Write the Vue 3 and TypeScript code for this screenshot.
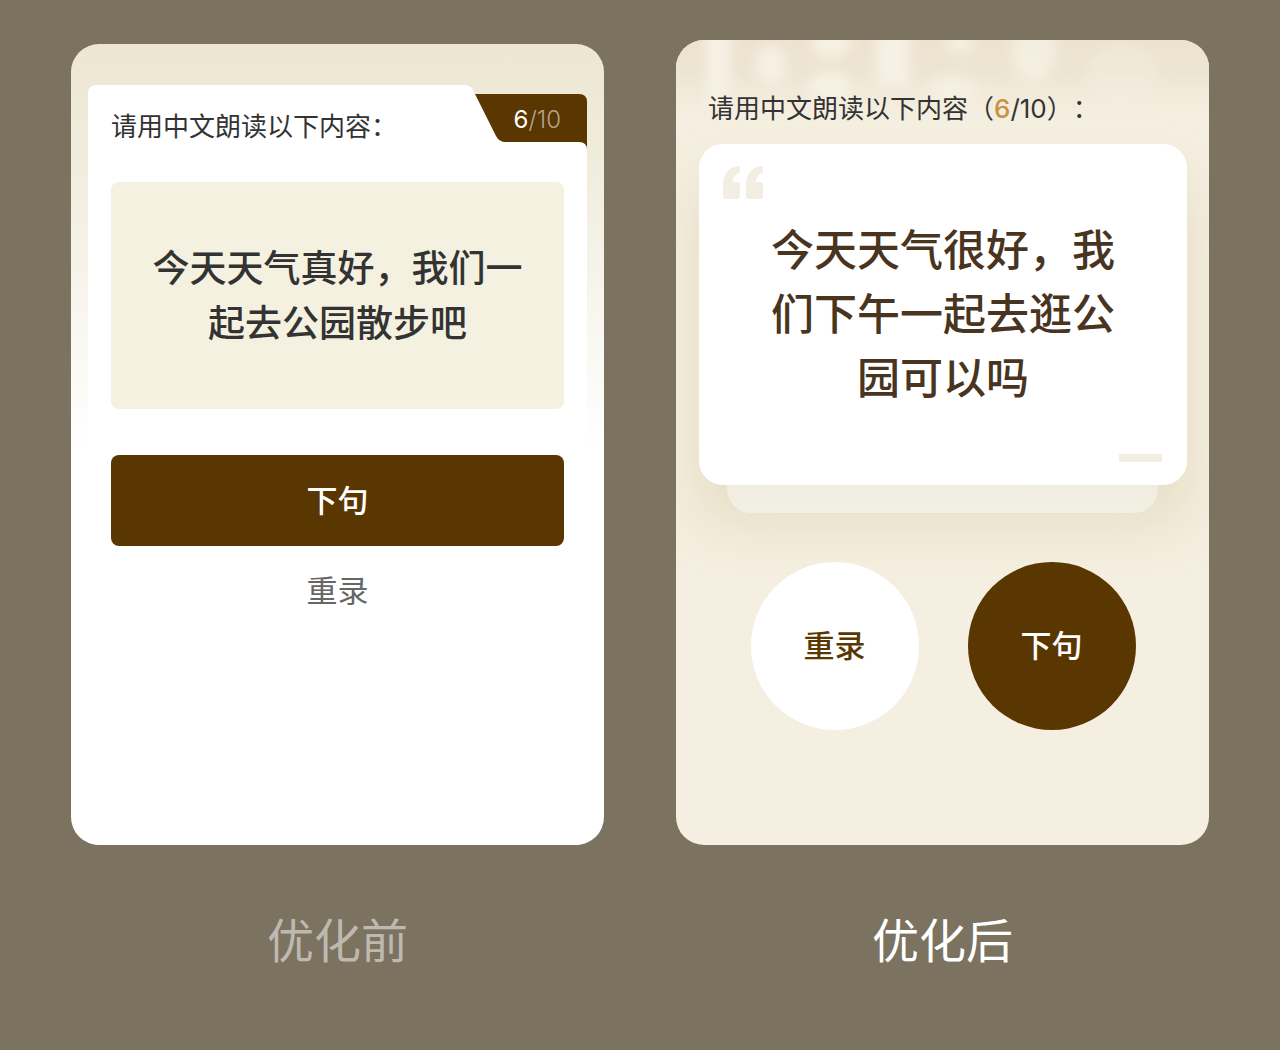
<script setup lang="ts">
interface Progress {
  current: number
  total: number
}

const progress: Progress = { current: 6, total: 10 }
const prompt = '请用中文朗读以下内容'
const sentenceBefore = '今天天气真好，我们一起去公园散步吧'
const sentenceAfter = '今天天气很好，我们下午一起去逛公园可以吗'
</script>

<template>
  <main class="board">
    <section class="column">
      <div class="phone phone-before">
        <div class="sheet">
          <header class="sheet-head">
            <h2 class="prompt">{{ prompt }}：</h2>
            <div class="tab">
              <svg class="tab-shape" viewBox="0 0 130 65" width="130" height="65" aria-hidden="true">
                <path d="M14 9H122Q130 9 130 17V65H30Z" fill="#5a3600" />
                <path d="M0 0H8Q14 0 17 7L39 51Q42 57 49 57H122Q130 57 130 65H0Z" fill="#fff" />
              </svg>
              <span class="tab-count"><b>{{ progress.current }}</b>/{{ progress.total }}</span>
            </div>
          </header>
          <div class="sheet-body">
            <p class="sentence-box">{{ sentenceBefore }}</p>
            <button type="button" class="bar-button">下句</button>
            <button type="button" class="text-button">重录</button>
          </div>
        </div>
      </div>
      <p class="caption caption-muted">优化前</p>
    </section>

    <section class="column">
      <div class="phone phone-after">
        <svg class="haze" viewBox="0 0 533 80" preserveAspectRatio="none" aria-hidden="true">
          <defs>
            <filter id="soft" x="-20%" y="-40%" width="140%" height="180%">
              <feGaussianBlur stdDeviation="6" />
            </filter>
            <linearGradient id="fade" x1="0" y1="0" x2="0" y2="1">
              <stop offset="0" stop-color="#ece2d0" />
              <stop offset="0.4" stop-color="#ede5d3" />
              <stop offset="1" stop-color="#f0e8d8" stop-opacity="0" />
            </linearGradient>
          </defs>
          <rect width="533" height="80" fill="url(#fade)" />
          <g filter="url(#soft)" fill="#f6f1e4">
            <rect x="30" y="-20" width="24" height="90" />
            <ellipse cx="95" cy="25" rx="15" ry="20" />
            <ellipse cx="155" cy="4" rx="20" ry="14" />
            <ellipse cx="154" cy="48" rx="22" ry="16" />
            <rect x="200" y="-20" width="34" height="66" />
            <ellipse cx="284" cy="2" rx="16" ry="12" opacity="0.8" />
            <ellipse cx="276" cy="50" rx="26" ry="14" opacity="0.8" />
            <ellipse cx="358" cy="12" rx="22" ry="30" opacity="0.8" />
            <ellipse cx="446" cy="34" rx="36" ry="30" opacity="0.4" />
          </g>
        </svg>
        <h2 class="prompt prompt-after">
          {{ prompt }}（<span class="count"><b>{{ progress.current }}</b>/{{ progress.total }}</span>）：
        </h2>
        <div class="stack">
          <div class="quote-card">
            <svg class="quote-mark" viewBox="0 0 40 33" width="40" height="33" aria-hidden="true">
              <path d="M17 0V7C12 8 10 12 10 16H14Q17 16 17 19V30Q17 33 14 33H3Q0 33 0 30V19C0 8 6 0 17 0Z" fill="#f2eee1" />
              <path d="M40 0V7C35 8 33 12 33 16H37Q40 16 40 19V30Q40 33 37 33H26Q23 33 23 30V19C23 8 29 0 40 0Z" fill="#f2eee1" />
            </svg>
            <p class="sentence-large">{{ sentenceAfter }}</p>
            <span class="dash"></span>
          </div>
          <div class="under-card"></div>
        </div>
        <div class="rounds">
          <button type="button" class="round round-light">重录</button>
          <button type="button" class="round round-dark">下句</button>
        </div>
      </div>
      <p class="caption">优化后</p>
    </section>
  </main>
</template>

<style>
body {
  margin: 0;
  background: #fff;
}
</style>

<style scoped>
.board {
  display: grid;
  grid-template-columns: 1fr 1fr;
  gap: 72px;
  align-items: end;
  box-sizing: border-box;
  padding: 40px 71px 74px;
  background: #7c7260;
  color: #333;
  font-family: Inter, "Noto Sans CJK SC", sans-serif;
}

h2,
p {
  margin: 0;
  font-weight: 400;
}

button {
  border: 0;
  padding: 0;
  font-family: inherit;
  font-size: 31px;
  line-height: 46px;
  cursor: pointer;
}

.phone {
  position: relative;
  box-sizing: border-box;
  overflow: hidden;
  border-radius: 28px;
}

.phone-before {
  padding: 41px 17px 0;
  background: linear-gradient(#ede6d2 0, #f0ecdc 110px, #fff 410px);
}

.sheet-head {
  display: flex;
  height: 65px;
}

.prompt {
  font-size: 26px;
  line-height: 38px;
  white-space: nowrap;
}

.sheet-head .prompt {
  flex: 1;
  padding: 23px 0 0 23px;
  border-top-left-radius: 8px;
  background: #fff;
}

.tab {
  position: relative;
  width: 130px;
}

.tab-shape {
  display: block;
}

.tab-count {
  position: absolute;
  top: 20px;
  right: 26px;
  color: #b5a48c;
  font-size: 24px;
  font-weight: 300;
  line-height: 30px;
}

.tab-count b {
  color: #fff;
  font-weight: 400;
}

.sheet-body {
  display: flex;
  flex-direction: column;
  padding: 32px 23px 231px;
  background: #fff;
}

.sentence-box {
  padding: 59px 41px 58px;
  border-radius: 8px;
  background: #f5f1e0;
  font-size: 37px;
  font-weight: 500;
  line-height: 55px;
  text-align: center;
}

.bar-button {
  height: 91px;
  margin-top: 46px;
  border-radius: 8px;
  background: #5a3600;
  color: #fff;
  font-weight: 500;
}

.text-button {
  align-self: center;
  margin-top: 22px;
  background: none;
  color: #666;
}

.phone-after {
  padding: 50px 22px 115px 23px;
  background: #f5efe1;
}

.haze {
  position: absolute;
  top: 0;
  left: 0;
  width: 100%;
  height: 80px;
}

.prompt-after {
  position: relative;
  padding-left: 9px;
  text-spacing-trim: space-all;
}

.count b {
  color: #c8923e;
  font-weight: 500;
}

.stack {
  position: relative;
  margin-top: 16px;
}

.quote-card {
  position: relative;
  z-index: 1;
  padding: 74px 70px 75px;
  border-radius: 24px;
  background: #fff;
  box-shadow: 0 36px 60px rgba(180, 165, 105, 0.26);
}

.quote-mark {
  position: absolute;
  top: 22px;
  left: 24px;
}

.sentence-large {
  color: #49341f;
  font-size: 43px;
  font-weight: 500;
  line-height: 64px;
  text-align: center;
}

.dash {
  position: absolute;
  right: 25px;
  bottom: 23px;
  width: 43px;
  height: 8px;
  background: #f2eee1;
}

.under-card {
  position: relative;
  z-index: 2;
  height: 28px;
  margin: 0 29px 0 28px;
  border-radius: 0 0 24px 24px;
  background: linear-gradient(#f0ece0, #f2f0e4);
}

.rounds {
  position: relative;
  z-index: 2;
  display: flex;
  justify-content: center;
  gap: 49px;
  margin-top: 49px;
}

.round {
  width: 168px;
  height: 168px;
  border-radius: 50%;
  font-weight: 500;
}

.round-light {
  background: #fff;
  color: #5a3600;
}

.round-dark {
  background: #5a3600;
  color: #fff;
}

.caption {
  margin-top: 61px;
  color: #fff;
  font-size: 47px;
  line-height: 70px;
  text-align: center;
}

.caption-muted {
  color: #beb9b0;
}
</style>
